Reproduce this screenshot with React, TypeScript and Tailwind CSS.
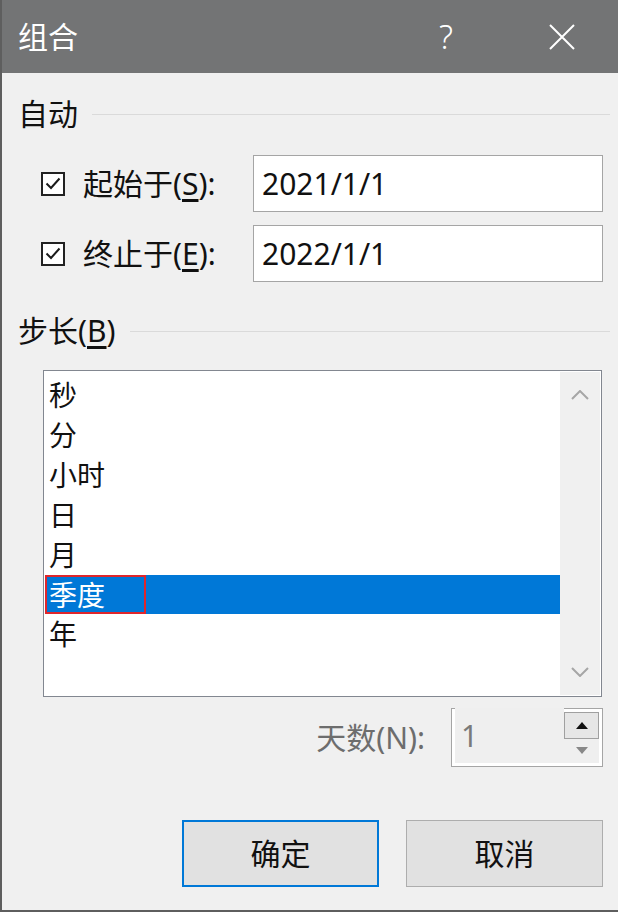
const font = { fontFamily: '"Noto Sans", "Noto Sans CJK SC", sans-serif' };

const Check = () => (
  <div className="shrink-0 w-[24px] h-[24px] border-2 border-[#222] bg-white flex items-center justify-center">
    <svg width="16" height="13" viewBox="0 0 16 13">
      <path d="M1.5 6.5 L6 11 L14.5 1.5" fill="none" stroke="#1a1a1a" strokeWidth="2" />
    </svg>
  </div>
);

const items = ["秒", "分", "小时", "日", "月", "季度", "年"];

export default function App() {
  return (
    <div
      className="w-[618px] h-[912px] bg-[#f0f0f0] flex flex-col border-l-2 border-b-2 border-[#5e5e5e] text-[#111] overflow-hidden"
      style={font}
    >
      {/* Title bar */}
      <div className="h-[73px] shrink-0 bg-[#737475] flex items-center pl-[16px] text-white">
        <span className="text-[30px]">组合</span>
        <span className="ml-auto mr-[96px] text-[33px] font-light">?</span>
        <svg width="26" height="26" viewBox="0 0 26 26" className="mr-[43px]">
          <path d="M1 1 L25 25 M25 1 L1 25" stroke="white" strokeWidth="2" />
        </svg>
      </div>

      {/* 自动 */}
      <div className="mt-[23px] h-[36px] flex items-center pl-[16px] pr-[8px]">
        <span className="text-[30px] leading-none">自动</span>
        <div className="flex-1 h-px bg-[#dadada] ml-[14px]" />
      </div>

      <div className="mt-[23px] flex items-center pl-[39px]">
        <Check />
        <span className="ml-[18px] text-[30px] leading-none">
          起始于(<span className="underline underline-offset-4">S</span>):
        </span>
        <div className="ml-auto mr-[15px] w-[350px] h-[57px] bg-white border border-[#a5a5a5] flex items-center pl-[8px] text-[30px]">
          2021/1/1
        </div>
      </div>

      <div className="mt-[13px] flex items-center pl-[39px]">
        <Check />
        <span className="ml-[18px] text-[30px] leading-none">
          终止于(<span className="underline underline-offset-4">E</span>):
        </span>
        <div className="ml-auto mr-[15px] w-[350px] h-[57px] bg-white border border-[#a5a5a5] flex items-center pl-[8px] text-[30px]">
          2022/1/1
        </div>
      </div>

      {/* 步长 */}
      <div className="mt-[31px] h-[36px] flex items-center pl-[16px] pr-[8px]">
        <span className="text-[30px] leading-none">
          步长(<span className="underline underline-offset-4">B</span>)
        </span>
        <div className="flex-1 h-px bg-[#dadada] ml-[14px]" />
      </div>

      {/* List box */}
      <div className="mt-[21px] ml-[41px] w-[559px] h-[327px] bg-white border border-[#828790] flex">
        <div className="flex-1 pt-[4px] pl-[1px]">
          {items.map((it) =>
            it === "季度" ? (
              <div key={it} className="h-[39px] bg-[#0078d7] flex items-center text-white text-[28px]">
                <span className="h-[39px] w-[101px] border-2 border-[#e0262b] flex items-center pl-[2px]">{it}</span>
              </div>
            ) : (
              <div key={it} className="h-[40px] flex items-center pl-[4px] text-[28px]">
                {it}
              </div>
            )
          )}
        </div>
        <div className="w-[40px] bg-[#f0f0f0] my-[1px] mr-[1px] flex flex-col items-center justify-between py-[18px]">
          <svg width="18" height="10" viewBox="0 0 18 10">
            <path d="M1 9 L9 1 L17 9" fill="none" stroke="#a6a6a6" strokeWidth="2" />
          </svg>
          <svg width="18" height="10" viewBox="0 0 18 10">
            <path d="M1 1 L9 9 L17 1" fill="none" stroke="#a6a6a6" strokeWidth="2" />
          </svg>
        </div>
      </div>

      {/* 天数 */}
      <div className="mt-[11px] flex items-center justify-end pr-[15px]">
        <span className="text-[30px] text-[#6d6d6d] mr-[26px]">天数(N):</span>
        <div className="w-[152px] h-[59px] border border-[#a5a5a5] bg-white p-[3px] flex">
          <div className="flex-1 bg-[#efefef] text-[30px] text-[#7a7a7a] pl-[6px] flex items-center -mt-[4px]">1</div>
          <div className="w-[35px] flex flex-col bg-[#efefef]">
            <div className="flex-1 border border-[#a0a0a0] bg-[#e6e6e6] flex items-center justify-center">
              <svg width="12" height="7" viewBox="0 0 12 7"><path d="M0 7 L6 0 L12 7 Z" fill="#111" /></svg>
            </div>
            <div className="flex-1 flex items-center justify-center">
              <svg width="12" height="7" viewBox="0 0 12 7"><path d="M0 0 L6 7 L12 0 Z" fill="#888" /></svg>
            </div>
          </div>
        </div>
      </div>

      {/* Buttons */}
      <div className="mt-[53px] flex justify-end gap-[27px] pr-[15px]">
        <button className="w-[197px] h-[67px] bg-[#e1e1e1] border-2 border-[#0078d7] text-[30px]">确定</button>
        <button className="w-[197px] h-[67px] bg-[#e1e1e1] border border-[#adadad] text-[30px]">取消</button>
      </div>
    </div>
  );
}
